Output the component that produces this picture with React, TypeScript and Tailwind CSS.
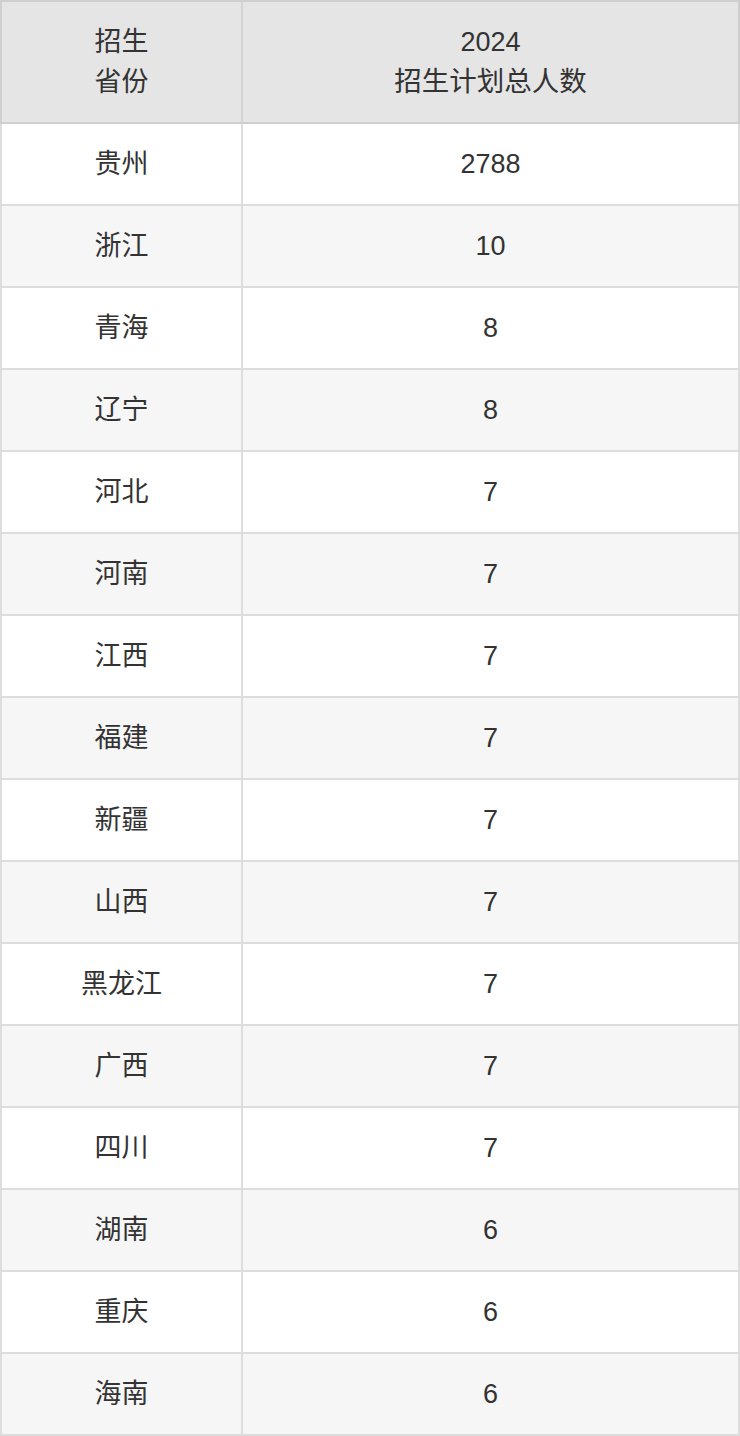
import React from "react";

const rows: [string, string][] = [
  ["贵州", "2788"],
  ["浙江", "10"],
  ["青海", "8"],
  ["辽宁", "8"],
  ["河北", "7"],
  ["河南", "7"],
  ["江西", "7"],
  ["福建", "7"],
  ["新疆", "7"],
  ["山西", "7"],
  ["黑龙江", "7"],
  ["广西", "7"],
  ["四川", "7"],
  ["湖南", "6"],
  ["重庆", "6"],
  ["海南", "6"],
];

export default function App() {
  return (
    <div
      className="w-[740px] text-[#333] text-[27px] leading-[40px]"
      style={{ fontFamily: '"Liberation Sans", "Noto Sans CJK SC", sans-serif' }}
    >
      <div className="flex h-[124px] border-2 border-[#cfcfcf] bg-[#e5e5e5]">
        <div className="w-[241px] shrink-0 border-r-2 border-[#d4d4d4] flex items-center justify-center text-center">
          <div>
            招生
            <br />
            省份
          </div>
        </div>
        <div className="flex-1 flex items-center justify-center text-center">
          <div>
            2024
            <br />
            <span className="text-[27.5px]">招生计划总人数</span>
          </div>
        </div>
      </div>
      {rows.map(([p, n], i) => (
        <div
          key={p}
          className={`flex h-[82px] border-x-2 border-b-2 border-[#dddddd] ${
            i % 2 === 0 ? "bg-white" : "bg-[#f6f6f6]"
          }`}
        >
          <div className="w-[241px] shrink-0 border-r-2 border-[#dddddd] flex items-center justify-center">
            {p}
          </div>
          <div className="flex-1 flex items-center justify-center">{n}</div>
        </div>
      ))}
    </div>
  );
}
